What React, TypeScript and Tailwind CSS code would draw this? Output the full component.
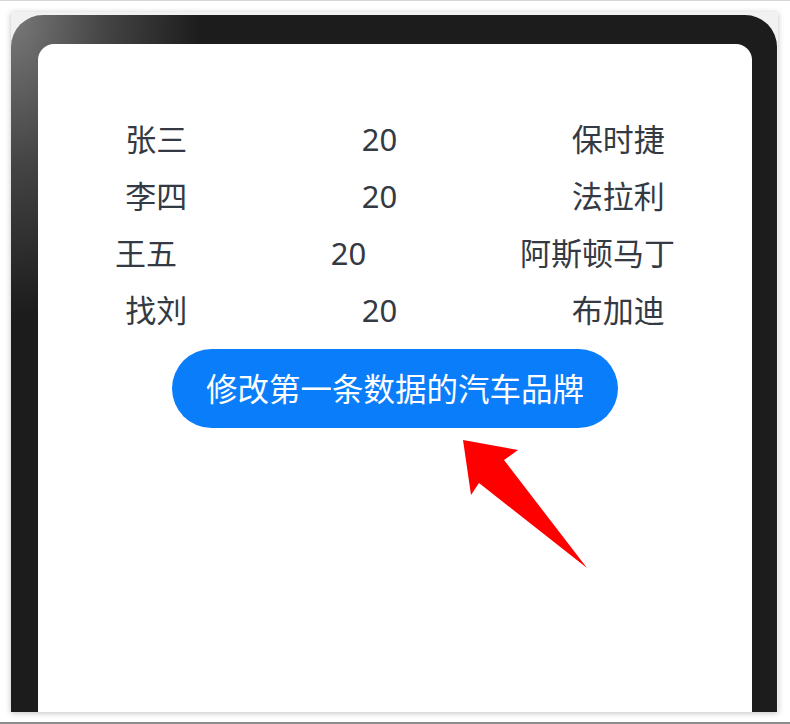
import React from 'react';

const rows = [
  { name: '张三', age: 20, car: '保时捷' },
  { name: '李四', age: 20, car: '法拉利' },
  { name: '王五', age: 20, car: '阿斯顿马丁' },
  { name: '找刘', age: 20, car: '布加迪' },
];

const font = { fontFamily: '"Noto Sans", "Noto Sans CJK SC", sans-serif' };

export default function App() {
  return (
    <div
      className="relative w-[790px] h-[724px] bg-white border-t border-b-2 border-t-[#d6d6d6] border-b-[#8e8e8e] overflow-hidden"
      style={font}
    >
      <div className="pl-[11px] pt-[11px]">
        {/* phone frame */}
        <div className="w-[767px] h-[700px] bg-[#f1f1f1] shadow-[0_1px_6px_rgba(0,0,0,0.25)] pt-[3px]">
          <div className="w-[766px] h-[697px] flex flex-col rounded-t-[32px] pl-[27px] pr-[25px] pt-[29px] bg-[#1c1c1c] bg-[radial-gradient(ellipse_190px_300px_at_0_0,#7a7a7a_0%,#444444_50%,#1c1c1c_100%)]">
            <div className="flex-1 bg-white rounded-t-[16px] flex flex-col items-center pt-[67px]">
              {rows.map((r) => (
                <div key={r.name} className="w-full h-[57px] flex items-center justify-around text-[31px] leading-none text-[#343a43]">
                  <span>{r.name}</span>
                  <span>{r.age}</span>
                  <span>{r.car}</span>
                </div>
              ))}
              <button className="mt-[10px] w-[446px] h-[79px] rounded-full bg-[#0a7dfa] text-white text-[31.5px] leading-none">
                修改第一条数据的汽车品牌
              </button>
            </div>
          </div>
        </div>
      </div>

      {/* annotation arrow */}
      <svg className="absolute left-0 top-0 pointer-events-none" width="790" height="724" viewBox="0 0 790 724">
        <polygon points="463,439 518,449 504,459 587,567 479,482 471,494" fill="#ff0000" />
      </svg>
    </div>
  );
}
